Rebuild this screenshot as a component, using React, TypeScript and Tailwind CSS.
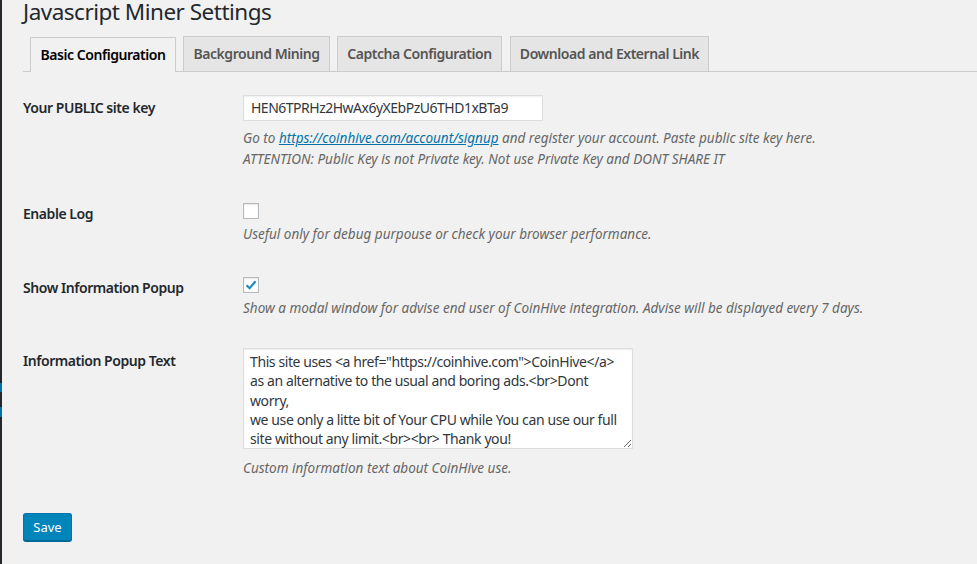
import React from 'react'

const font = { fontFamily: '"Noto Sans", "Open Sans", sans-serif' }

function Tab({ label, active, width }: { label: string; active?: boolean; width: string }) {
  return (
    <div
      className={
        'ml-[7px] h-[35px] border border-b-0 border-[#ccc] px-[8px] py-[5px] text-center text-[14px] leading-[24px] font-semibold tracking-[-0.45px] whitespace-nowrap ' +
        width +
        (active ? ' bg-[#f1f1f1] text-black relative top-px' : ' bg-[#e5e5e5] text-[#555]')
      }
    >
      {label}
    </div>
  )
}

function Check({ checked }: { checked?: boolean }) {
  return (
    <div className="w-4 h-4 border border-[#b4b9be] bg-white shadow-[inset_0_1px_2px_rgba(0,0,0,0.1)] flex items-center justify-center">
      {checked && (
        <svg width="14" height="14" viewBox="0 0 14 14">
          <path d="M2.5 7.2 L5.6 10.2 L11.6 3.2" fill="none" stroke="#1e8cbe" strokeWidth="2.2" />
        </svg>
      )}
    </div>
  )
}

function Label({ text, pt }: { text: string; pt: string }) {
  return (
    <div className={'w-[220px] shrink-0 text-[14px] leading-[18px] font-semibold tracking-[-0.45px] text-[#23282d] ' + pt}>
      {text}
    </div>
  )
}

const popupText = [
  'This site uses <a href="https://coinhive.com">CoinHive</a>',
  'as an alternative to the usual and boring ads.<br>Dont',
  'worry,',
  'we use only a litte bit of Your CPU while You can use our full',
  'site without any limit.<br><br> Thank you!',
].join('\n')

export default function App() {
  return (
    <div className="w-[977px] h-[564px] overflow-hidden bg-[#f1f1f1] flex" style={font}>
      <div className="w-[2px] shrink-0 bg-[#23282d] flex flex-col">
        <div className="h-[383px]" />
        <div className="h-[9px] bg-[#0073aa]" />
        <div className="h-[15px]" />
        <div className="h-[10px] bg-[#0073aa]" />
      </div>
      <div className="flex-1 pl-[21px]">
        <h1 className="text-[22.5px] leading-[24px] font-normal tracking-[-0.5px] text-[#23282d]">
          Javascript Miner Settings
        </h1>
        <div className="mt-[12px] flex items-end border-b border-[#ccc] mr-[-2px]">
          <Tab label="Basic Configuration" active width="w-[146px]" />
          <Tab label="Background Mining" width="w-[147px]" />
          <Tab label="Captcha Configuration" width="w-[165px]" />
          <Tab label="Download and External Link" width="w-[199px] ml-[8px]" />
        </div>

        <div className="flex mt-[23px]">
          <Label text="Your PUBLIC site key" pt="pt-[4px]" />
          <div>
            <div className="w-[300px] h-[26px] border border-[#ddd] bg-white shadow-[inset_0_1px_2px_rgba(0,0,0,0.07)] px-[7px] text-[14px] leading-[24px] tracking-[-0.5px] text-[#32373c]">
              HEN6TPRHz2HwAx6yXEbPzU6THD1xBTa9
            </div>
            <div className="mt-[7px] text-[13.5px] leading-[21px] italic text-[#666]">
              <p>
                Go to{' '}
                <a className="text-[#0073aa] underline" href="#">
                  https://coinhive.com/account/signup
                </a>{' '}
                and register your account. Paste public site key here.
              </p>
              <p>ATTENTION: Public Key is not Private key. Not use Private Key and DONT SHARE IT</p>
            </div>
          </div>
        </div>

        <div className="flex mt-[33px]">
          <Label text="Enable Log" pt="pt-[2px]" />
          <div>
            <Check />
            <p className="mt-[5px] text-[13.5px] leading-[21px] italic text-[#666]">
              Useful only for debug purpouse or check your browser performance.
            </p>
          </div>
        </div>

        <div className="flex mt-[32px]">
          <Label text="Show Information Popup" pt="pt-[2px]" />
          <div>
            <Check checked />
            <p className="mt-[5px] text-[13.5px] leading-[21px] italic text-[#666]">
              Show a modal window for advise end user of CoinHive integration. Advise will be displayed every 7 days.
            </p>
          </div>
        </div>

        <div className="flex mt-[29px]">
          <Label text="Information Popup Text" pt="pt-[4px]" />
          <div>
            <textarea
              readOnly
              wrap="off"
              value={popupText}
              className="block w-[390px] h-[101px] border border-[#ddd] bg-white shadow-[inset_0_1px_2px_rgba(0,0,0,0.07)] px-[6px] pt-[3px] text-[14px] leading-[19.3px] tracking-[-0.4px] text-[#32373c] overflow-hidden outline-none"
              style={font}
            />
            <p className="mt-[9px] text-[13.5px] leading-[21px] italic text-[#666]">Custom information text about CoinHive use.</p>
          </div>
        </div>

        <button className="mt-[34px] w-[49px] h-[28px] rounded-[3px] border border-[#0073aa] border-b-[#006799] bg-[#0085ba] text-white text-[13px] leading-[26px] shadow-[0_1px_0_#006799]">
          Save
        </button>
      </div>
    </div>
  )
}
